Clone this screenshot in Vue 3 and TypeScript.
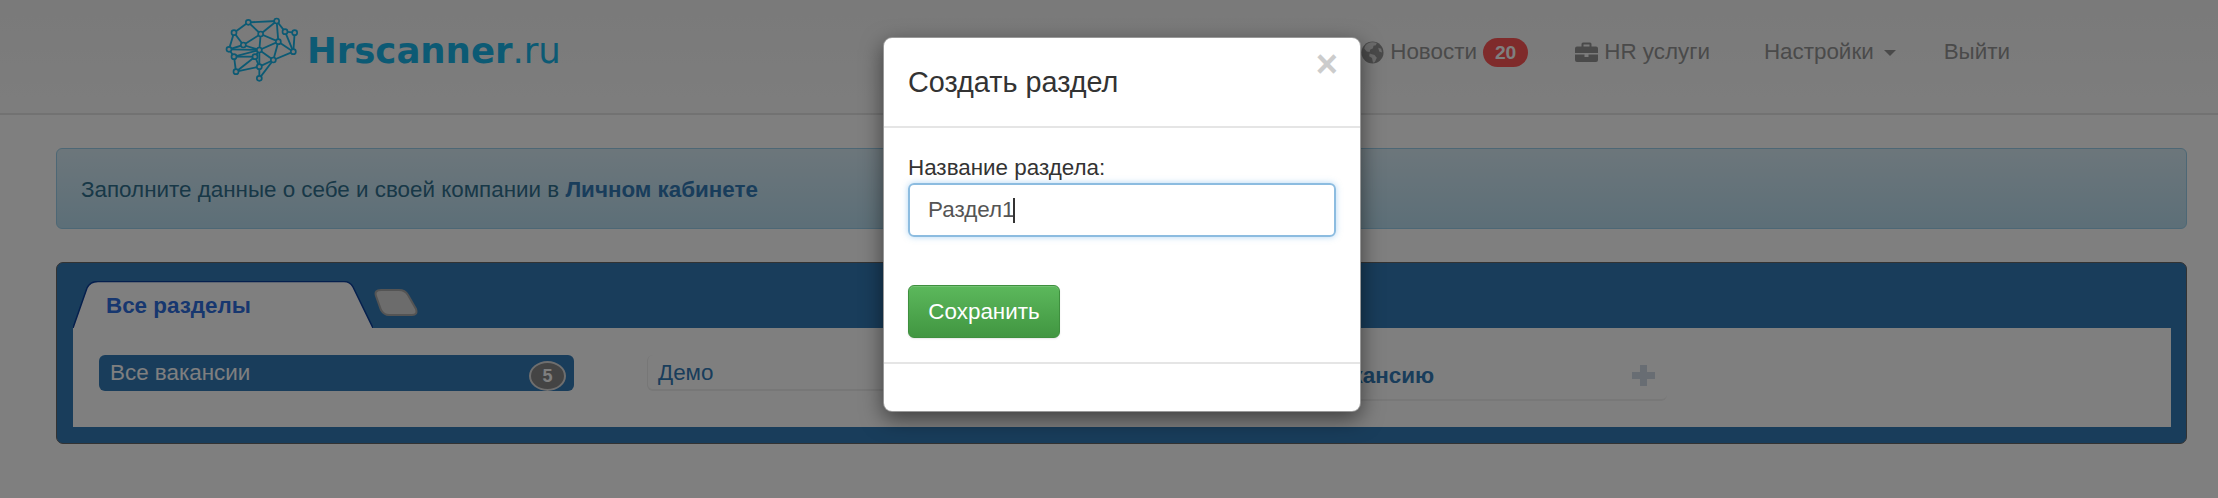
<script setup lang="ts">
const nodes: [number, number][] = [
  [85,37],[170,33],[224,68],[42,68],[122,72],[175,95],[27,118],[70,105],[118,120],[220,125],[42,140],[160,150],[48,185],[105,140],[118,205],[118,170],[195,65]
]
const edges: [number, number][] = [
  [0,1],[0,3],[0,4],[1,4],[1,16],[16,2],[2,9],[16,9],[1,5],[5,9],[5,11],[9,11],[4,5],[4,8],[4,7],[3,7],[3,6],[6,7],[7,8],[8,11],[8,15],[11,15],[11,14],[15,14],[10,12],[10,13],[12,13],[12,15],[13,15],[6,10],[10,8],[13,8],[5,8],[6,8]
]
const navItems = ['Настройки', 'Выйти']
</script>

<template>
  <div class="page">
    <header class="navbar">
      <div class="logo">
        <svg class="brain" viewBox="0 0 270 240" width="90" height="80">
          <line v-for="(e, i) in edges" :key="'e' + i" :x1="nodes[e[0]][0]" :y1="nodes[e[0]][1]" :x2="nodes[e[1]][0]" :y2="nodes[e[1]][1]" stroke="#18b4e8" stroke-width="5.500" />
          <circle v-for="(n, i) in nodes" :key="'n' + i" :cx="n[0]" :cy="n[1]" r="7.500" fill="#f0f0f0" stroke="#18b4e8" stroke-width="5" />
        </svg>
        <span class="logo-text"><b>Hrscanner</b>.ru</span>
      </div>
      <nav class="nav">
        <span class="nav-item news">
          <svg class="ico" viewBox="0 0 24 24" width="23" height="23">
            <circle cx="12" cy="12" r="11.500" fill="#959595" />
            <path d="M7 2.500c3-1.500 7-1.500 9.500-.3l-1 2.300-2.500.5-.5 2.500-3 1.500-.5 2.500-3-.5L3.500 8C3.500 6 5 3.500 7 2.500zM9 13l5 1.500 2.500 3-2 4.500-2 .8-1-5-3-2zM18 7l3 1 1 4-3-1z" fill="#d8d8d8" />
          </svg>
          <span>Новости</span>
          <span class="badge">20</span>
        </span>
        <span class="nav-item hr">
          <svg class="ico" viewBox="0 0 23 23" width="23" height="23">
            <path d="M8 1.500h7a1.500 1.500 0 0 1 1.500 1.500v2.500H21a2 2 0 0 1 2 2V12H0V7.500a2 2 0 0 1 2-2h4.500V3A1.500 1.500 0 0 1 8 1.500zm.5 2v2h6v-2zM0 13.500h9.500V16h4v-2.500H23V19a2 2 0 0 1-2 2H2a2 2 0 0 1-2-2z" fill="#959595" fill-rule="evenodd" />
          </svg>
          <span>HR услуги</span>
        </span>
        <span class="nav-item settings">{{ navItems[0] }}<i class="caret"></i></span>
        <span class="nav-item exit">{{ navItems[1] }}</span>
      </nav>
    </header>

    <div class="alert">Заполните данные о себе и своей компании в <a>Личном кабинете</a></div>

    <section class="panel">
      <div class="tabs">
        <div class="tab">
          <svg class="tab-shape" viewBox="0 0 300 47" width="300" height="47">
            <path d="M0 47 L14 7 Q17 .5 25 .5 L271 .5 Q277 .5 280 6 L300 47 Z" fill="#fff" />
            <path d="M0 47 L14 7 Q17 .5 25 .5 L271 .5 Q277 .5 280 6 L300 47" fill="none" stroke="#0a3f9a" stroke-width="1.500" />
          </svg>
          <span class="tab-label">Все разделы</span>
        </div>
        <svg class="tab-add" viewBox="0 0 44 27" width="44" height="27">
          <path d="M2 7 Q0 1 7 1 L25 1 Q31 1 34 6 L42 20 Q44 26 38 26 L15 26 Q10 26 7 21 Z" fill="#d8d8d8" stroke="#a8a8a8" stroke-width="2" />
        </svg>
      </div>
      <div class="lists">
        <div class="item active">
          <span class="item-text">Все вакансии</span>
          <span class="count">5</span>
        </div>
        <div class="item demo"><span class="item-text">Демо</span></div>
        <div class="item add">
          <span class="add-text">Добавить вакансию</span>
          <svg class="plus" viewBox="0 0 23 21" width="23" height="21">
            <path d="M8 0h7v7h8v7h-8v7H8v-7H0V7h8z" fill="#d0dae6" />
          </svg>
        </div>
      </div>
    </section>

    <div class="backdrop"></div>

    <div class="modal">
      <div class="modal-header">
        <h4>Создать раздел</h4>
        <span class="close">×</span>
      </div>
      <div class="modal-body">
        <label>Название раздела:</label>
        <div class="input">Раздел1<i class="cursor"></i></div>
        <button class="btn" type="button">Сохранить</button>
      </div>
      <div class="modal-footer"></div>
    </div>
  </div>
</template>

<style>
html, body { margin: 0; background: #fff; }
</style>

<style scoped>
.page {
  position: relative;
  width: 2218px;
  height: 498px;
  overflow: hidden;
  background: #fff;
  font-family: "Liberation Sans", Arial, sans-serif;
  font-size: 22.400px;
  color: #333;
}
.navbar {
  height: 115px;
  box-sizing: border-box;
  display: flex;
  align-items: flex-start;
  background: linear-gradient(#f4f4f4, #fbfbfb);
  border-bottom: 2px solid #e4e4e4;
}
.logo { display: flex; align-items: flex-start; margin-left: 220px; margin-top: 10px; }
.logo-text {
  font-family: "DejaVu Sans", sans-serif;
  font-size: 35.500px;
  line-height: 42px;
  color: #18b4e8;
  margin-left: -3px;
  margin-top: 20px;
}
.nav { margin-left: auto; padding-right: 208px; display: flex; align-items: center; height: 104px; color: #959595; }
.nav-item { display: flex; align-items: center; }
.news { gap: 6px; }
.ico { flex: none; }
.badge {
  background: #ff5656;
  color: #fff;
  font-weight: 700;
  font-size: 19.200px;
  line-height: 29px;
  padding: 0 12px;
  border-radius: 15px;
}
.hr { gap: 6px; margin-left: 47px; }
.settings { margin-left: 54px; }
.caret {
  margin-left: 10px;
  margin-top: 2px;
  border-top: 6px solid #959595;
  border-left: 6px solid transparent;
  border-right: 6px solid transparent;
}
.exit { margin-left: 48px; }
.alert {
  margin: 33px 31px 0 56px;
  height: 81px;
  box-sizing: border-box;
  padding: 0 24px;
  line-height: 81px;
  border: 1px solid #9acfea;
  border-radius: 6px;
  background: linear-gradient(#d9edf7, #b9def0);
  color: #31708f;
}
.alert a { color: #337ab7; font-weight: 700; }
.panel {
  margin: 33px 31px 0 56px;
  height: 182px;
  box-sizing: border-box;
  border: 1px solid #666;
  border-radius: 7px;
  background: #337ab7;
  padding: 18px 15px 0 16px;
}
.tabs { display: flex; align-items: flex-start; height: 47px; }
.tab { position: relative; width: 300px; height: 47px; }
.tab-shape { position: absolute; left: 0; top: 0; }
.tab-label {
  position: relative;
  display: block;
  padding: 10px 0 0 33px;
  font-weight: 700;
  line-height: 30px;
  color: #2e6edf;
}
.tab-add { margin-top: 8px; margin-left: 1px; }
.lists {
  height: 99px;
  box-sizing: border-box;
  background: #fff;
  padding: 27px 0 0 26px;
  display: flex;
  align-items: flex-start;
}
.item { box-sizing: border-box; height: 36px; border-radius: 6px; }
.item-text { display: block; line-height: 36px; }
.active {
  position: relative;
  width: 475px;
  background: #337ab7;
  color: #fff;
  padding-left: 11px;
}
.count {
  position: absolute;
  right: 8px;
  top: 6px;
  box-sizing: border-box;
  width: 37px;
  height: 30px;
  border-radius: 50%;
  border: 2px solid #ddd;
  background: #888;
  color: #fff;
  font-weight: 700;
  font-size: 18px;
  line-height: 26px;
  text-align: center;
}
.demo {
  width: 488px;
  margin-left: 73px;
  border-left: 1px solid #eee;
  border-bottom: 2px solid #eee;
  color: #337ab7;
  padding-left: 10px;
}
.add {
  width: 512px;
  height: 46px;
  margin-left: 20px;
  padding: 4px 12px 0 56px;
  border-bottom: 2px solid #f0f0f0;
  display: flex;
  justify-content: space-between;
  color: #337ab7;
}
.add-text { font-weight: 700; line-height: 34px; }
.plus { margin-top: 6px; }
.backdrop { position: absolute; inset: 0; background: rgba(0, 0, 0, 0.5); }
.modal {
  position: absolute;
  left: 883px;
  top: 37px;
  width: 478px;
  height: 375px;
  box-sizing: border-box;
  background: #fff;
  border: 1px solid rgba(0, 0, 0, 0.4);
  border-radius: 9px;
  box-shadow: 0 7px 21px rgba(0, 0, 0, 0.5);
}
.modal-header {
  position: relative;
  height: 90px;
  box-sizing: border-box;
  border-bottom: 2px solid #e5e5e5;
  padding: 24px 24px 0;
}
.modal-header h4 { margin: 0; font-weight: 400; font-size: 28.800px; line-height: 40px; }
.close {
  position: absolute;
  right: 22px;
  top: 6px;
  font-size: 38px;
  font-weight: 700;
  line-height: 40px;
  color: #ccc;
}
.modal-body { height: 234px; box-sizing: border-box; padding: 26px 24px 0; }
.modal-body label { display: block; line-height: 28px; }
.input {
  height: 54px;
  width: 428px;
  box-sizing: border-box;
  margin-top: 1px;
  padding: 0 18px;
  color: #555;
  border: 2px solid #8cbce0;
  border-radius: 6px;
  box-shadow: 0 0 6px rgba(102, 175, 233, 0.5);
  display: flex;
  align-items: center;
}
.cursor { width: 1.500px; height: 25px; background: #333; margin-left: -1px; }
.btn {
  display: block;
  margin-top: 48px;
  width: 152px;
  height: 53px;
  border: 1px solid #3e8f3e;
  border-radius: 6px;
  background: linear-gradient(#5cb85c, #419641);
  color: #fff;
  font: inherit;
  padding: 0;
  box-shadow: inset 0 1px 0 rgba(255, 255, 255, 0.15), 0 1px 2px rgba(0, 0, 0, 0.1);
}
.modal-footer { border-top: 2px solid #e5e5e5; }
</style>
